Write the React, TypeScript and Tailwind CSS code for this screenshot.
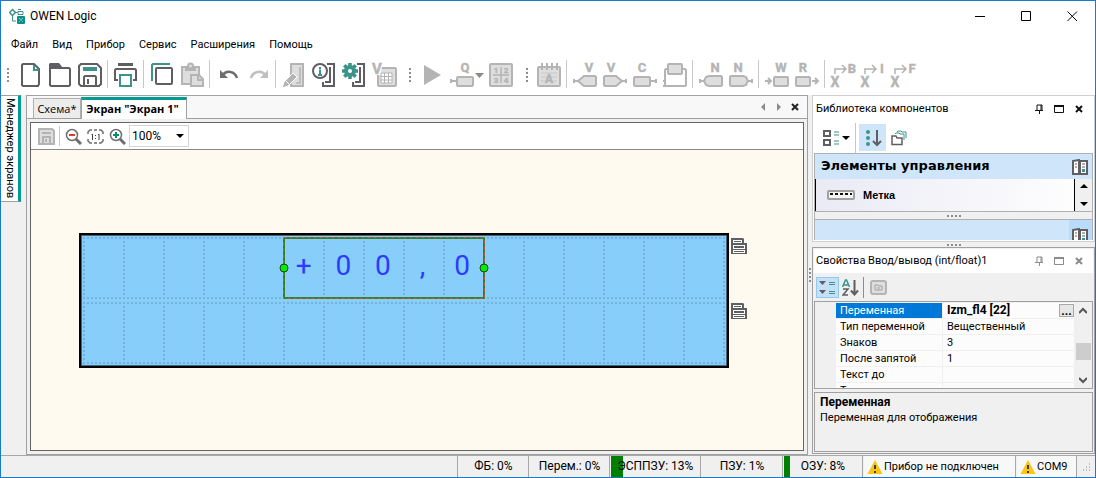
import type { ReactNode } from 'react';

const DARK = '#5f5f61';
const TEAL = '#3b9389';
const GRAY = '#b4b4b4';
const PALE = '#dedede';

const MENU = ['Файл', 'Вид', 'Прибор', 'Сервис', 'Расширения', 'Помощь'];

const PROPERTIES = [
  { name: 'Тип переменной', value: 'Вещественный' },
  { name: 'Знаков', value: '3' },
  { name: 'После запятой', value: '1' },
  { name: 'Текст до', value: '' },
  { name: 'Текст после', value: '' },
];

const DIGITS = ['+', '0', '0', ',', '0'];

interface IconProps {
  children: ReactNode;
  size?: number;
  width?: number;
}

function Icon({ children, size = 30, width = size }: IconProps) {
  return (
    <svg
      width={width}
      height={size}
      viewBox={`0 0 ${width} ${size}`}
      fill="none"
      className="block shrink-0"
      aria-hidden="true"
    >
      {children}
    </svg>
  );
}

interface ToolProps {
  label: string;
  children: ReactNode;
  width?: number;
}

function Tool({ label, children, width = 30 }: ToolProps) {
  return (
    <button type="button" aria-label={label} title={label} className="shrink-0">
      <Icon width={width}>{children}</Icon>
    </button>
  );
}

function Separator() {
  return (
    <div className="flex h-7 w-[6px] shrink-0 pl-[2px]">
      <div className="w-px bg-[#c8c8c8]" />
    </div>
  );
}

function Grip() {
  return (
    <Icon width={18}>
      <path d="M11 8v14" stroke="#8c8c8c" strokeWidth="2" strokeDasharray="2 2" />
    </Icon>
  );
}

function Letter({ x, y = 12, size = 13, children }: { x: number; y?: number; size?: number; children: string }) {
  return (
    <text
      x={x}
      y={y}
      fill={GRAY}
      stroke={GRAY}
      strokeWidth="0.400"
      fontSize={size}
      fontWeight="700"
      textAnchor="middle"
      fontFamily="Roboto, sans-serif"
    >
      {children}
    </text>
  );
}

function Device() {
  return (
    <>
      <path d="M18 4h7v22H14v-4" stroke={DARK} strokeWidth="2" />
      <path d="M21 7v15h-5" stroke={DARK} strokeWidth="2" />
    </>
  );
}

function Floppy({ body, bar, fill = 'none' }: { body: string; bar: string; fill?: string }) {
  return (
    <>
      <path d="M6 4h16l4 4v16l-2 2H6l-2-2V6z" fill={fill} stroke={body} strokeWidth="2" />
      <path d="M8 9h14" stroke={bar} strokeWidth="4" />
      <path d="M9 26V17l1-1h10l1 1v9M13 19v5" stroke={body} strokeWidth="2" />
    </>
  );
}

function Toolbar() {
  return (
    <div className="flex h-[37px] shrink-0 items-start overflow-hidden pt-[2px]">
      <Icon width={14}>
        <path d="M7 8v14" stroke="#8c8c8c" strokeWidth="2" strokeDasharray="2 2" />
      </Icon>
      <Tool label="Новый">
        <path d="M8 4h11l5 5v15l-1 2H8l-1-1V5z" stroke={DARK} strokeWidth="2" />
        <path d="M19 5v5h5" stroke={TEAL} strokeWidth="2" />
      </Tool>
      <Tool label="Открыть">
        <path d="M5 25V8h19l1 1v16l-1 1H6z" stroke={DARK} strokeWidth="2" />
        <path d="M4 8V4l1-1h9l4 5z" fill={DARK} />
      </Tool>
      <Tool label="Сохранить">
        <Floppy body={DARK} bar={TEAL} />
      </Tool>
      <Separator />
      <Tool label="Печать">
        <path d="M7 4.500h15" stroke={DARK} strokeWidth="3" />
        <path d="M7 20H4V10l1-1h19l1 1v10h-3" stroke={DARK} strokeWidth="2" />
        <path d="M9 15h11v11H9z" stroke={TEAL} strokeWidth="2" />
      </Tool>
      <Separator />
      <Tool label="Копировать">
        <path d="M5 21V5l1-1h17" stroke={TEAL} strokeWidth="2" />
        <rect x="9" y="8" width="16" height="16" rx="1" stroke={DARK} strokeWidth="2" />
      </Tool>
      <Tool label="Вставить">
        <path d="M5 7h17v17H5z" fill={PALE} stroke={GRAY} strokeWidth="2" />
        <path d="M8 6h11v5H8z" fill={GRAY} />
        <circle cx="13.500" cy="6" r="2.500" fill={PALE} stroke={GRAY} strokeWidth="2" />
        <path d="M14 15h8l4 4v7H14z" fill={PALE} stroke={GRAY} strokeWidth="2" />
        <path d="M21 15v5h5" stroke={GRAY} strokeWidth="2" />
      </Tool>
      <Separator />
      <Tool label="Отменить">
        <path d="M10 15c3-5 12-4 14 3" stroke="#6d6e70" strokeWidth="2.500" />
        <path d="M7 10v8h8z" fill="#6d6e70" />
      </Tool>
      <Tool label="Повторить">
        <path d="M22 15c-3-5-12-4-14 3" stroke="#c0c0c0" strokeWidth="2.500" />
        <path d="M25 10v8h-8z" fill="#c0c0c0" />
      </Tool>
      <Separator />
      <Tool label="Записать в прибор">
        <path d="M12 4h12v22H12z" fill={PALE} stroke={GRAY} strokeWidth="2" />
        <path d="M21 7v16h-4" stroke={GRAY} strokeWidth="1.500" />
        <path d="M3 28l2-6 9-9 4 4-9 9z" fill={GRAY} stroke="#fff" />
        <path d="M7 21l3 3" stroke="#fff" />
      </Tool>
      <Tool label="Информация">
        <Device />
        <circle cx="11" cy="11" r="7" fill="#fff" stroke={DARK} strokeWidth="2" />
        <path d="M11 7v2M10 10.500h1V15M9 15h4" stroke={TEAL} strokeWidth="2" />
      </Tool>
      <Tool label="Настройка прибора">
        <Device />
        <circle cx="11" cy="11" r="9" fill="#fff" />
        <circle cx="11" cy="11" r="4" stroke={TEAL} strokeWidth="4" />
        <path
          d="M11 3v3M11 16v3M3 11h3M16 11h3M5.300 5.300l2.200 2.200M14.500 14.500l2.200 2.200M5.300 16.700l2.200-2.200M14.500 7.500l2.200-2.200"
          stroke={TEAL}
          strokeWidth="3.500"
        />
      </Tool>
      <Tool label="Таблица переменных">
        <rect x="9" y="8" width="18" height="18" rx="1" fill={PALE} stroke={GRAY} strokeWidth="2" />
        <path d="M12 13h11v10H12zM12 16.500h11M12 20h11M15.500 13v10M19.500 13v10" fill="#fff" stroke={GRAY} />
        <path d="M3 3h11l-3 12H6z" fill="#fff" />
        <Letter x={8} y={14} size={15}>V</Letter>
      </Tool>
      <Grip />
      <Tool label="Запуск">
        <path d="M7 5l17 10L7 25z" fill={GRAY} />
      </Tool>
      <Tool label="Блок" width={39}>
        <Letter x={18}>Q</Letter>
        <rect x="10" y="17" width="16" height="9" rx="1" fill={PALE} stroke={GRAY} strokeWidth="2" />
        <path d="M4 21h6M4 19v4" stroke={GRAY} strokeWidth="2" />
        <path d="M28 13h9l-4.500 5z" fill="#8b8b8b" />
      </Tool>
      <Tool label="Клавиатура">
        <rect x="4" y="4" width="22" height="22" rx="1" fill={PALE} stroke={GRAY} strokeWidth="2" />
        <path d="M15 7v16M7 15h16" stroke={GRAY} strokeWidth="1.500" />
        <Letter x={10} y={13} size={8}>1</Letter>
        <Letter x={20} y={13} size={8}>2</Letter>
        <Letter x={10} y={23} size={8}>3</Letter>
        <Letter x={20} y={23} size={8}>4</Letter>
      </Tool>
      <Grip />
      <Tool label="Календарь">
        <rect x="4" y="7" width="22" height="19" rx="1" fill={PALE} stroke={GRAY} strokeWidth="2" />
        <path d="M8 3v7M13 3v7M18 3v7M23 3v7" stroke={GRAY} strokeWidth="2" />
        <path d="M7 13h16M7 17h16M7 21h16" stroke="#c8c8c8" />
        <Letter x={15} y={23} size={12}>A</Letter>
      </Tool>
      <Separator />
      <Tool label="Входная переменная">
        <Letter x={19}>V</Letter>
        <path d="M8 21l6-5h11l1 1v8l-1 1H14z" fill={PALE} stroke={GRAY} strokeWidth="2" />
        <path d="M4 21h4M4 19v4" stroke={GRAY} strokeWidth="2" />
      </Tool>
      <Tool label="Выходная переменная">
        <Letter x={11}>V</Letter>
        <path d="M22 21l-6-5H5l-1 1v8l1 1h11z" fill={PALE} stroke={GRAY} strokeWidth="2" />
        <path d="M22 21h4M26 19v4" stroke={GRAY} strokeWidth="2" />
      </Tool>
      <Tool label="Константа">
        <Letter x={12}>C</Letter>
        <rect x="4" y="17" width="16" height="9" rx="1" fill={PALE} stroke={GRAY} strokeWidth="2" />
        <path d="M20 21h6M26 19v4" stroke={GRAY} strokeWidth="2" />
      </Tool>
      <Tool label="Макрос">
        <path d="M8 9H6L5 10v15l1 1h19l1-1V10l-1-1h-3M3 21h3M3 26h3" stroke={GRAY} strokeWidth="2" />
        <rect x="8" y="4" width="14" height="10" rx="1" fill={PALE} stroke={GRAY} strokeWidth="2" />
      </Tool>
      <Separator />
      <Tool label="Сетевой вход">
        <Letter x={19}>N</Letter>
        <path d="M8 21l2-4 3-1h12l1 1v8l-1 1H13l-3-1z" fill={PALE} stroke={GRAY} strokeWidth="2" />
        <path d="M4 21h4M4 19v4" stroke={GRAY} strokeWidth="2" />
      </Tool>
      <Tool label="Сетевой выход">
        <Letter x={12}>N</Letter>
        <path d="M22 21l-2-4-3-1H5l-1 1v8l1 1h12l3-1z" fill={PALE} stroke={GRAY} strokeWidth="2" />
        <path d="M22 21h4M26 19v4" stroke={GRAY} strokeWidth="2" />
      </Tool>
      <Separator />
      <Tool label="Запись">
        <Letter x={19}>W</Letter>
        <rect x="12" y="17" width="14" height="9" rx="1" fill={PALE} stroke={GRAY} strokeWidth="2" />
        <path d="M3 21h6M6 18l3 3-3 3" stroke={GRAY} strokeWidth="2" />
      </Tool>
      <Tool label="Чтение">
        <Letter x={11}>R</Letter>
        <rect x="4" y="17" width="14" height="9" rx="1" fill={PALE} stroke={GRAY} strokeWidth="2" />
        <path d="M20 21h6M23 18l3 3-3 3" stroke={GRAY} strokeWidth="2" />
      </Tool>
      <Separator />
      {['B', 'I', 'F'].map((type) => (
        <Tool key={type} label={`Преобразование в ${type}`}>
          <Letter x={7} y={27} size={14}>X</Letter>
          <path d="M7 14V9h10M14 5l4 4-4 4" stroke={GRAY} strokeWidth="1.500" />
          <Letter x={24} y={13} size={13}>{type}</Letter>
        </Tool>
      ))}
    </div>
  );
}

function TitleBar() {
  return (
    <header className="flex h-[30px] shrink-0 items-center justify-between pl-2">
      <div className="flex items-center gap-[5px] pb-px">
        <Icon size={16}>
          <path d="M3.500 1.500l3 3-3 3-3-3z" stroke={TEAL} strokeWidth="1.500" />
          <path d="M6 4.500h3M9 1.500h3M9 3.500h5v3H9zM3.500 8v5H7" stroke={TEAL} />
          <rect x="8" y="8" width="8" height="8" rx="1" fill="#0b8f86" />
          <path d="M10 10l4 4M14 10l-4 4" stroke="#d5efec" strokeDasharray="1 1" />
        </Icon>
        <h1 className="text-[12px] leading-4">OWEN Logic</h1>
      </div>
      <div className="flex">
        <button type="button" aria-label="Свернуть" className="flex w-[46px] justify-center">
          <Icon size={11}><path d="M0 5.500h10" stroke="#000" /></Icon>
        </button>
        <button type="button" aria-label="Развернуть" className="flex w-[46px] justify-center">
          <Icon size={11}><path d="M.5.5h9v9h-9z" stroke="#000" /></Icon>
        </button>
        <button type="button" aria-label="Закрыть" className="flex w-[46px] justify-center">
          <Icon size={11}><path d="M.5.500l9.500 9.500M10 .5L.5 10" stroke="#000" /></Icon>
        </button>
      </div>
    </header>
  );
}

function PanelHeader({ title, color }: { title: string; color: string }) {
  return (
    <div className="flex h-6 shrink-0 items-center justify-between bg-white pr-2 pl-[2px]">
      <h2 className="text-[11px] leading-4 whitespace-nowrap">{title}</h2>
      <div className="flex gap-2">
        <button type="button" aria-label="Закрепить">
          <Icon size={12}><path d="M4 7V2h5v5M8 2v5M2 7.500h8M6.500 8v3" stroke={color} /></Icon>
        </button>
        <button type="button" aria-label="Развернуть панель">
          <Icon size={12}>
            <path d="M1.500 2.500h9v7h-9z" stroke={color} />
            <path d="M1 3h10" stroke={color} strokeWidth="2" />
          </Icon>
        </button>
        <button type="button" aria-label="Закрыть панель">
          <Icon size={12}><path d="M3 3l6 6M9 3L3 9" stroke={color} strokeWidth="2" /></Icon>
        </button>
      </div>
    </div>
  );
}

function Editor() {
  return (
    <main className="flex min-w-0 flex-1 flex-col border border-[#a0a0a0] bg-[#f8f8f8]">
      <div className="flex h-[23px] shrink-0 items-end justify-between border-b border-[#a0a0a0] pr-[6px] pl-[6px]">
        <div className="flex items-end font-['Open_Sans',sans-serif]">
          <button type="button" className="h-[20px] w-12 border border-b-0 border-[#b0b0b0] bg-[#ececec] text-center text-[11px] leading-[18px]">
            Схема*
          </button>
          <button type="button" className="-mb-px h-[22px] w-[106px] border-x border-t-3 border-x-[#a0a0a0] border-t-[#009b93] bg-white pr-[3px] pb-px text-center text-[11px] leading-[18px] font-bold whitespace-nowrap">
            Экран "Экран 1"
          </button>
        </div>
        <div className="flex h-[22px] items-center gap-1">
          <button type="button" aria-label="Предыдущая вкладка">
            <Icon size={12}><path d="M8 2v8L4 6z" fill="#8b8b8b" /></Icon>
          </button>
          <button type="button" aria-label="Следующая вкладка">
            <Icon size={12}><path d="M4 2v8l4-4z" fill="#8b8b8b" /></Icon>
          </button>
          <button type="button" aria-label="Закрыть вкладку">
            <Icon size={12}><path d="M3 3l6 6M9 3L3 9" stroke="#222" strokeWidth="2" /></Icon>
          </button>
        </div>
      </div>
      <div className="flex min-h-0 flex-1 flex-col bg-[#f0f0f0] p-[3px]">
        <section className="flex min-h-0 flex-1 flex-col border border-[#646464] bg-[#fffaf0]">
          <div className="flex h-[27px] shrink-0 items-center border-b border-[#8a8a8a] bg-white pl-[7px]">
            <button type="button" aria-label="Сохранить экран">
              <Icon size={17}>
                <path d="M1 1h13l2 2v13H1z" fill={PALE} stroke={GRAY} strokeWidth="2" />
                <path d="M4 5h9" stroke={GRAY} strokeWidth="2" />
                <path d="M5 16V9h7v7M8 11v3" stroke={GRAY} strokeWidth="2" />
              </Icon>
            </button>
            <div className="ml-1 h-5 w-px bg-[#c8c8c8]" />
            <button type="button" aria-label="Уменьшить" className="ml-[5px]">
              <Icon size={17}>
                <circle cx="7" cy="7" r="5.500" stroke="#6d6e70" strokeWidth="1.500" />
                <path d="M11 11l5 5" stroke="#6d6e70" strokeWidth="3" />
                <path d="M4 7h6" stroke="#e23b24" strokeWidth="2" />
              </Icon>
            </button>
            <button type="button" aria-label="Масштаб 1:1" className="ml-[5px]">
              <Icon size={17}>
                <path
                  d="M1 6V4l2-2h2M12 2h2l2 2v2M1 11v2l2 2h2M12 15h2l2-2v-2M7 2h3M7 15h3"
                  stroke="#6d6e70"
                  strokeWidth="1.500"
                />
                <path d="M4.500 7l1-1v6M11 7l1-1v6M8.500 7v1M8.500 10v1" stroke="#444" />
              </Icon>
            </button>
            <button type="button" aria-label="Увеличить" className="ml-[5px]">
              <Icon size={17}>
                <circle cx="7" cy="7" r="5.500" stroke="#6d6e70" strokeWidth="1.500" />
                <path d="M11 11l5 5" stroke="#6d6e70" strokeWidth="3" />
                <path d="M4 7h6M7 4v6" stroke="#00936b" strokeWidth="2" />
              </Icon>
            </button>
            <div className="relative ml-[3px]">
              <select
                aria-label="Масштаб"
                defaultValue="100"
                className="block h-[22px] w-[60px] appearance-none border border-[#d5d5d5] bg-white pl-[2px] text-[12px] leading-[18px]"
              >
                <option value="50">50%</option>
                <option value="100">100%</option>
                <option value="200">200%</option>
              </select>
              <svg width="8" height="4" viewBox="0 0 8 4" className="pointer-events-none absolute top-[9px] right-[5px]" aria-hidden="true">
                <path d="M0 0h8L4 4z" fill="#000" />
              </svg>
            </div>
          </div>
          <div className="flex min-h-0 flex-1 gap-[2px] overflow-hidden pt-[83px] pl-12">
            <Display />
            <div className="flex flex-col gap-[49px] pt-[5px]">
              <RowButton label="Свойства строки 1" />
              <RowButton label="Свойства строки 2" />
            </div>
          </div>
        </section>
      </div>
    </main>
  );
}

function RowButton({ label }: { label: string }) {
  return (
    <button type="button" aria-label={label} className="block">
      <Icon size={16}>
        <path d="M0 0h12l1 1v4h3v11H0z" fill={DARK} />
        <path d="M2 2h9v3H2zM2 7h12v4H2zM2 12h12v3H2z" fill="#fff" />
        <path d="M3 3.500h7M3 13.500h10" stroke={DARK} />
        <path d="M3 9h10" stroke={DARK} strokeWidth="2" />
      </Icon>
    </button>
  );
}

function Display() {
  const columns = Array.from({ length: 17 }, (_, i) => 5 + i * 40);

  return (
    <div className="relative h-[135px] w-[650px] shrink-0">
      <svg width="650" height="135" viewBox="0 0 650 135" className="block" aria-hidden="true">
        <rect x="1" y="1" width="648" height="133" fill="#87cefa" stroke="#000" strokeWidth="2" />
        <rect x="2.500" y="2.500" width="645" height="130" fill="none" stroke="#41637a" />
        <g stroke="#74b3de" strokeWidth="2" strokeDasharray="2 2" fill="none">
          {columns.map((x) => (
            <path key={x} d={`M${x} 4v62M${x} 69v62`} />
          ))}
          <path d="M4 5h642M4 65h642M4 70h642M4 130h642" />
        </g>
      </svg>
      <div className="absolute top-1 left-[204px] grid h-[62px] w-[202px] grid-cols-5 border-2 border-[#3f7d23]">
        {DIGITS.map((digit, i) => (
          <span key={i} className="pt-[7px] pr-[2px] text-center font-['Roboto',sans-serif] text-[28px] leading-10 text-[#2b3cff]">
            {digit}
          </span>
        ))}
      </div>
      <svg width="212" height="62" viewBox="0 0 212 62" className="absolute top-1 left-[199px]" aria-hidden="true">
        <path d="M5.500.500h201v61h-201z" fill="none" stroke="#c25a4c" strokeDasharray="3 3" />
        <circle cx="6" cy="31" r="4" fill="#00f000" stroke="#1c3d1c" />
        <circle cx="206" cy="31" r="4" fill="#00f000" stroke="#1c3d1c" />
      </svg>
    </div>
  );
}

function HorizontalGrip() {
  return (
    <div className="flex h-full items-center justify-center">
      <svg width="14" height="2" viewBox="0 0 14 2" aria-hidden="true">
        <path d="M0 1h14" stroke="#8c8c8c" strokeWidth="2" strokeDasharray="2 2" />
      </svg>
    </div>
  );
}

function CabinetIcon() {
  return (
    <Icon size={16}>
      <path d="M1 2l6-1v14H1zM8 2h7v13H8z" fill="#fff" stroke={DARK} strokeWidth="2" />
      <path d="M3 5h2M3 8h2M10 5h3M10 8h3" stroke={DARK} />
      <path d="M10 10h3v3h-3z" fill={TEAL} />
    </Icon>
  );
}

function LibraryPanel() {
  return (
    <section className="flex h-[147px] shrink-0 flex-col border border-[#d0d0d0] bg-white p-px">
      <PanelHeader title="Библиотека компонентов" color="#111" />
      <div className="flex h-8 shrink-0 items-center pt-px pl-2">
        <button type="button" aria-label="Вид списка">
          <Icon size={18} width={28}>
            <path d="M2 2h6v5H2zM2 11h6v5H2z" stroke={DARK} strokeWidth="2" />
            <path d="M12 3h5M12 6h5M12 12h5M12 15h5" stroke={TEAL} />
            <path d="M20 7h8l-4 4z" fill="#000" />
          </Icon>
        </button>
        <div className="ml-[5px] h-[30px] w-px bg-[#c8c8c8]" />
        <button type="button" aria-label="Сортировать" className="ml-[3px] flex h-[27px] w-[27px] items-center justify-center bg-[#cfe6fa]">
          <Icon size={18}>
            <path d="M13 1v14M9 12l4 4 4-4" stroke={DARK} strokeWidth="2" />
            <circle cx="4" cy="3" r="2" fill={TEAL} />
            <circle cx="4" cy="9" r="2" fill={TEAL} />
            <circle cx="4" cy="15" r="2" fill={TEAL} />
          </Icon>
        </button>
        <button type="button" aria-label="Папки" className="ml-1">
          <Icon size={18}>
            <path d="M5 5l1-1h3l1 1h4v6M7 3l1-1h3l1 1h4v6" stroke={TEAL} />
            <path d="M2 15V7h4l1 2h5v6.500H2z" stroke={DARK} strokeWidth="1.500" />
          </Icon>
        </button>
      </div>
      <div className="flex min-h-0 flex-1 flex-col overflow-hidden border border-b-0 border-[#b0b0b0]">
        <div className="flex h-[25px] shrink-0 items-center justify-between bg-[#cfe6fa] pr-1 pl-[6px]">
          <h3 className="pb-[2px] font-['DejaVu_Sans',sans-serif] text-[13px] leading-5 font-bold whitespace-nowrap">
            Элементы управления
          </h3>
          <CabinetIcon />
        </div>
        <div className="flex h-8 shrink-0 bg-linear-to-r from-[#eaeaf5] to-white">
          <button type="button" className="flex flex-1 items-center gap-2 border-l border-black pl-[11px] text-left font-['Liberation_Sans',sans-serif] text-[11px] font-bold">
            <Icon size={10} width={28}>
              <rect x="1" y="1" width="26" height="8" rx="1" fill="#f4f4f4" stroke="#a0a0a0" strokeWidth="2" />
              <path d="M3 4h22" stroke="#111" strokeWidth="2" strokeDasharray="3 2" />
            </Icon>
            Метка
          </button>
          <div className="flex w-[18px] flex-col items-center justify-between border-l border-black bg-[#f0f0f0] py-[5px]">
            <button type="button" aria-label="Вверх">
              <svg width="8" height="4" viewBox="0 0 8 4" className="block"><path d="M0 4h8L4 0z" fill="#000" /></svg>
            </button>
            <button type="button" aria-label="Вниз">
              <svg width="8" height="4" viewBox="0 0 8 4" className="block"><path d="M0 0h8L4 4z" fill="#000" /></svg>
            </button>
          </div>
        </div>
        <div className="h-[9px] shrink-0 border-y border-[#b0b0b0] bg-[#f0f0f0]">
          <HorizontalGrip />
        </div>
        <div className="flex flex-1 items-start justify-end overflow-hidden bg-[#cfe6fa]">
          <div className="bg-[#b9dcfb] pt-2 pr-1 pl-[3px]">
            <CabinetIcon />
          </div>
        </div>
      </div>
    </section>
  );
}

function PropertiesPanel() {
  return (
    <section className="flex min-h-0 flex-1 flex-col border border-[#a0a0a0] bg-[#f0f0f0] p-px">
      <PanelHeader title="Свойства Ввод/вывод (int/float)1" color="#8b8b8b" />
      <div className="flex h-[28px] shrink-0 items-center pl-[2px]">
        <button type="button" aria-label="По категориям" className="flex h-[21px] w-[23px] items-center justify-center border border-[#90c8f6] bg-[#c5e0f7]">
          <Icon size={17}>
            <path d="M0 2h7L3.500 6zM0 11h7l-3.500 4z" fill={DARK} />
            <path d="M10 3.500h6M10 5.500h6M10 12.500h6M10 14.500h6" stroke={TEAL} />
          </Icon>
        </button>
        <button type="button" aria-label="По алфавиту" className="ml-[3px]">
          <Icon size={17}>
            <path d="M.5 8l3-7h1l3 7M2 6h4" stroke={TEAL} strokeWidth="1.500" />
            <path d="M1 10h5l-5 6h5" stroke={DARK} strokeWidth="1.500" />
            <path d="M12.500 1v14M9 11.500l3.500 4 3.500-4" stroke={DARK} strokeWidth="2" />
          </Icon>
        </button>
        <div className="ml-1 h-[21px] w-px bg-[#8c8c8c]" />
        <button type="button" aria-label="Страницы свойств" className="ml-[6px]">
          <Icon size={17}>
            <rect x="1" y="2" width="15" height="13" rx="2" fill={PALE} stroke={GRAY} strokeWidth="2" />
            <path d="M5 11V6h3l1 1h3v4zM7 9h3" stroke="#a0a0a0" />
          </Icon>
        </button>
      </div>
      <div className="flex h-[88px] shrink-0 overflow-hidden border border-[#a0a0a0] pt-px pr-px">
        <div className="w-5 shrink-0" />
        <div className="min-w-0 flex-1 overflow-hidden">
          <table className="w-full table-fixed border-collapse bg-[#fcfcfc] text-[11px] leading-[15px] whitespace-nowrap">
            <tbody>
              <tr>
                <th scope="row" className="w-[107px] border border-t-0 border-[#f0f0f0] bg-[#0078d7] px-1 py-0 text-left font-normal text-white">
                  Переменная
                </th>
                <td className="border border-t-0 border-[#f0f0f0] p-0">
                  <div className="flex items-center justify-between pl-1 text-[12px] font-bold">
                    Izm_fl4 [22]
                    <button type="button" aria-label="Выбрать переменную" className="flex h-[13px] w-[15px] items-end justify-center border border-[#a8a8a8] bg-[#e6e6e6] leading-[10px]">
                      ...
                    </button>
                  </div>
                </td>
              </tr>
              {PROPERTIES.map(({ name, value }) => (
                <tr key={name}>
                  <th scope="row" className="border border-[#f0f0f0] px-1 py-0 text-left font-normal">{name}</th>
                  <td className="border border-[#f0f0f0] px-1 py-0">{value}</td>
                </tr>
              ))}
            </tbody>
          </table>
        </div>
        <div className="flex w-4 shrink-0 flex-col items-center justify-between py-1">
          <Icon size={8}><path d="M0 6l4-4 4 4" stroke="#555" strokeWidth="2" /></Icon>
          <div className="mt-3 h-[17px] w-[15px] bg-[#cdcdcd]" />
          <Icon size={8}><path d="M0 2l4 4 4-4" stroke="#555" strokeWidth="2" /></Icon>
        </div>
      </div>
      <div className="mt-[3px] min-h-0 flex-1 border border-[#a0a0a0] px-[5px] py-[2px] text-[11px] leading-[15px]">
        <h3 className="text-[12px] font-bold">Переменная</h3>
        <p>Переменная для отображения</p>
      </div>
    </section>
  );
}

function Meter({ label, value, className }: { label: string; value: number; className: string }) {
  return (
    <div className={`relative border-r border-[#a8a8a8] text-center ${className}`}>
      {value > 5 && (
        <div className="absolute inset-y-0 left-0 bg-[#008000]" style={{ width: `${value}%` }} />
      )}
      <span className="relative">{label}: {value}%</span>
    </div>
  );
}

function WarningIcon() {
  return (
    <Icon size={16}>
      <path d="M8 1l7.500 14H.5z" fill="#fdc50d" />
      <path d="M8 6v4M8 12v2" stroke="#33415c" strokeWidth="2" />
    </Icon>
  );
}

function StatusBar() {
  return (
    <footer className="flex h-[22px] shrink-0 gap-px border-t border-[#a8a8a8] bg-[#f0f0f0] text-[12px] leading-[20px] whitespace-nowrap">
      <div className="flex-1 border-r border-[#a8a8a8]" />
      <Meter label="ФБ" value={0} className="w-[70px]" />
      <Meter label="Перем." value={0} className="w-[80px]" />
      <Meter label="ЭСППЗУ" value={13} className="w-[90px]" />
      <Meter label="ПЗУ" value={1} className="w-[81px]" />
      <Meter label="ОЗУ" value={8} className="w-[79px]" />
      <div className="flex w-[152px] items-center gap-px border-r border-[#a8a8a8] bg-[#f8f8f8] pl-[3px] text-[11px]">
        <WarningIcon />
        <span>Прибор не подключен</span>
      </div>
      <div className="flex w-[60px] items-center gap-px border-r border-[#a8a8a8] bg-[#f8f8f8] pl-[3px] text-[11px]">
        <WarningIcon />
        <span>COM9</span>
      </div>
      <div className="flex w-[17px] items-center justify-center">
        <Icon size={8}>
          <path d="M6 1h1M3 4h1M6 4h1M0 7h1M3 7h1M6 7h1" stroke="#8c8c8c" />
        </Icon>
      </div>
    </footer>
  );
}

export default function App() {
  return (
    <div className="flex h-screen flex-col overflow-hidden border border-[#1979ca] bg-white font-['Roboto','Noto_Sans',sans-serif] text-black">
      <TitleBar />
      <nav className="flex h-[27px] shrink-0 items-center gap-[14px] pl-[10px] text-[11px] leading-4">
        {MENU.map((item) => (
          <button key={item} type="button">{item}</button>
        ))}
      </nav>
      <Toolbar />
      <div className="flex min-h-0 flex-1 bg-[#f0f0f0]">
        <aside className="w-[25px] shrink-0">
          <button type="button" className="flex h-[107px] w-5 items-center justify-center border-t border-r-3 border-b border-t-[#a0a0a0] border-r-[#009b93] border-b-[#a0a0a0] bg-white text-[11px] leading-4 whitespace-nowrap [writing-mode:vertical-rl]">
            Менеджер экранов
          </button>
        </aside>
        <Editor />
        <div className="flex w-1 shrink-0 items-center justify-center">
          <svg width="2" height="14" viewBox="0 0 2 14" aria-hidden="true">
            <path d="M1 0v14" stroke="#8c8c8c" strokeWidth="2" strokeDasharray="2 2" />
          </svg>
        </div>
        <div className="flex w-[283px] shrink-0 flex-col pb-px">
          <LibraryPanel />
          <div className="h-[5px] shrink-0">
            <HorizontalGrip />
          </div>
          <PropertiesPanel />
        </div>
      </div>
      <StatusBar />
    </div>
  );
}
